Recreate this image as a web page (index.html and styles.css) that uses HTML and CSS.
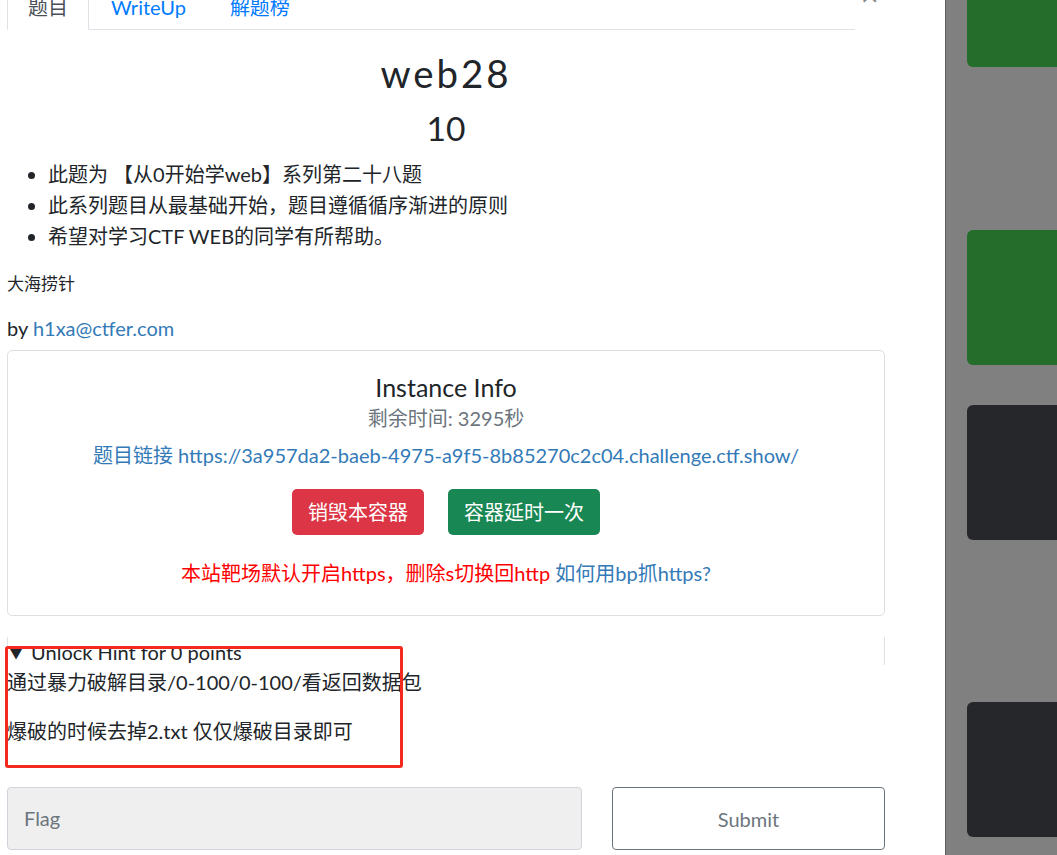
FILE: index.html
```html
<!DOCTYPE html>
<html lang="zh">
<head>
<meta charset="utf-8">
<title>web28</title>
<link rel="stylesheet" href="styles.css">
</head>
<body>
<div class="page">
  <div class="modal">
    <div class="modal-inner">
      <div class="tabs-row">
        <ul class="nav-tabs">
          <li class="tab active">题目</li>
          <li class="tab">WriteUp</li>
          <li class="tab">解题榜</li>
        </ul>
        <span class="close">×</span>
      </div>
      <div class="challenge">
        <h2 class="challenge-name">web28</h2>
        <h3 class="challenge-value">10</h3>
        <ul class="desc">
          <li>此题为 【从0开始学web】系列第二十八题</li>
          <li>此系列题目从最基础开始，题目遵循循序渐进的原则</li>
          <li>希望对学习CTF WEB的同学有所帮助。</li>
        </ul>
        <p class="small">大海捞针</p>
        <p class="author">by <a class="link">h1xa@ctfer.com</a></p>
        <div class="card">
          <div class="card-title">Instance Info</div>
          <div class="remain">剩余时间: 3295秒</div>
          <div class="url"><a class="link">题目链接 https://3a957da2-baeb-4975-a9f5-8b85270c2c04.challenge.ctf.show/</a></div>
          <div class="btns">
            <button class="btn btn-red">销毁本容器</button>
            <button class="btn btn-green">容器延时一次</button>
          </div>
          <div class="notice"><span class="red">本站靶场默认开启https，删除s切换回http</span> <a class="link">如何用bp抓https?</a></div>
        </div>
        <div class="hint-box">
          <div class="summary"><span class="caret">▼</span> Unlock Hint for 0 points</div>
        </div>
        <div class="hint-content">
          <p>通过暴力破解目录/0-100/0-100/看返回数据包</p>
          <p>爆破的时候去掉2.txt 仅仅爆破目录即可</p>
        </div>
        <div class="submit-row">
          <div class="flag-input">Flag</div>
          <button class="submit">Submit</button>
        </div>
      </div>
    </div>
    <div class="annot"></div>
  </div>
  <div class="backdrop">
    <div class="tile green first"></div>
    <div class="tile green second"></div>
    <div class="tile dark third"></div>
    <div class="tile dark fourth"></div>
  </div>
</div>
</body>
</html>
```
FILE: styles.css
```css
* { box-sizing: border-box; }
html, body { margin: 0; padding: 0; height: 100%; overflow: hidden; }
body {
  font-family: Lato, "Noto Sans CJK SC", sans-serif;
  font-size: 20px;
  line-height: 1.55;
  color: #212529;
  background: #fff;
}
.page { display: flex; height: 855px; }
.modal { position: relative; width: 945px; background: #fff; flex: none; }
.modal-inner { padding: 0 60px 0 7px; }

.tabs-row { display: flex; align-items: flex-start; margin-top: -15px; }
.nav-tabs {
  list-style: none; margin: 0; padding: 0;
  display: flex; width: 848px;
  border-bottom: 1px solid #dee2e6;
}
.tab {
  padding: 6px 21px 6px; color: #007bff; line-height: 30.7px;
  border: 1px solid transparent; margin-bottom: -1px;
}
.tab.active {
  color: #495057; border-color: #dee2e6 #dee2e6 #fff;
  background: #fff; padding: 6px 20px 6px 20px;
  border-radius: 4px 4px 0 0;
}
.close { color: #888; font-size: 30px; line-height: 1; margin-left: 6px; margin-top: -6px; }

.challenge { width: 878px; }
.challenge-name {
  text-align: center; font-weight: 400; font-size: 38.4px;
  letter-spacing: 3px; margin: 20px 0 0; line-height: 1.2;
}
.challenge-value {
  text-align: center; font-weight: 400; font-size: 33.6px;
  margin: 12px 0 0; line-height: 1.2;
}
.desc { margin: 11px 0 0; padding-left: 41px; }
.desc li { line-height: 31px; }
.small { font-size: 17px; margin: 19px 0 0; }
.author { margin: 16px 0 0; }
.link { color: #337ab7; text-decoration: none; }

.card {
  margin-top: 6px; border: 1px solid #dfdfdf; border-radius: 5px;
  text-align: center; padding: 21px 16px 27px;
}
.card-title { font-size: 25px; line-height: 30px; }
.remain { color: #6c757d; margin-top: 1px; line-height: 30px; }
.url { margin-top: 7px; line-height: 30px; }
.btns { display: flex; justify-content: center; gap: 24px; margin-top: 19px; }
.btn {
  font-family: inherit; font-size: 20px; line-height: 28px; color: #fff;
  border: 1px solid transparent; border-radius: 5px; padding: 8px 15px; height: 46px;
}
.btn-red { background: #dc3545; }
.btn-green { background: #198754; }
.notice { margin-top: 23px; line-height: 30px; }
.red { color: #ff0000; }

.hint-box {
  margin-top: 21px; height: 28px; border-left: 1px solid #dee2e6; border-right: 1px solid #dee2e6;
}
.summary { line-height: 30px; padding-left: 1px; margin-top: 2px; white-space: nowrap; }
.caret { font-size: 14px; vertical-align: 2px; margin-right: 3px; }
.hint-content { padding-top: 2px; }
.hint-content p { margin: 0 0 18px; line-height: 31px; }
.hint-content p:last-child { margin-bottom: 0; }

.submit-row { display: grid; grid-template-columns: 575px 273px; column-gap: 30px; margin-top: 40px; }
.flag-input {
  height: 63px; background: #efefef; border: 1px solid #ced4da; border-radius: 4px;
  color: #6c757d; padding: 0 16px; display: flex; align-items: center;
}
.submit {
  height: 63px; background: #fff; border: 1px solid #6c757d; border-radius: 4px;
  color: #6c757d; font-family: inherit; font-size: 20px;
}

.annot {
  position: absolute; left: 5px; top: 646px; width: 398px; height: 122px;
  border: 3px solid #f52a1f; border-radius: 3px;
}

.backdrop {
  flex: 1; background: #808080; border-left: 1px solid #5f5f5f;
  padding-left: 21px; overflow: hidden;
}
.tile { height: 135px; border-radius: 6px; width: 200px; }
.green { background: #256d2b; }
.dark { background: #26272b; }
.first { margin-top: -68px; }
.second { margin-top: 163px; }
.third { margin-top: 40px; }
.fourth { margin-top: 162px; }
```
